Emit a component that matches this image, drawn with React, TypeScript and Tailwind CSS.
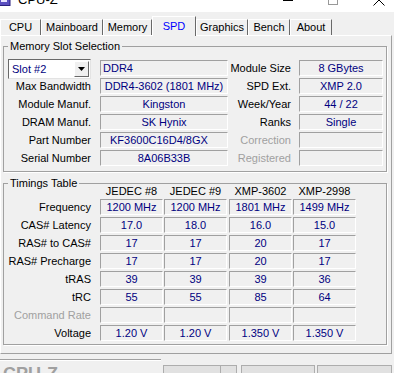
import React from "react"

const sunken =
  "h-[16px] border border-t-[#a0a0a0] border-l-[#a0a0a0] border-r-white border-b-white flex items-center text-[#000080] leading-none whitespace-pre"

const memRows = [
  { label: "Max Bandwidth", value: "DDR4-3602 (1801 MHz)", rLabel: "SPD Ext.", rValue: "XMP 2.0" },
  { label: "Module Manuf.", value: "Kingston", rLabel: "Week/Year", rValue: "44 / 22" },
  { label: "DRAM Manuf.", value: "SK Hynix", rLabel: "Ranks", rValue: "Single" },
  { label: "Part Number", value: "KF3600C16D4/8GX", rLabel: "Correction", rValue: "", dim: true, left: true },
  { label: "Serial Number", value: "8A06B33B", rLabel: "Registered", rValue: "", dim: true },
]

const timings = [
  { label: "Frequency", values: ["1200 MHz", "1200 MHz", "1801 MHz", "1499 MHz"] },
  { label: "CAS# Latency", values: ["17.0", "18.0", "16.0", "15.0"] },
  { label: "RAS# to CAS#", values: ["17", "17", "20", "17"] },
  { label: "RAS# Precharge", values: ["17", "17", "20", "17"] },
  { label: "tRAS", values: ["39", "39", "39", "36"] },
  { label: "tRC", values: ["55", "55", "85", "64"] },
  { label: "Command Rate", values: ["", "", "", ""], dim: true },
  { label: "Voltage", values: ["1.20 V", "1.20 V", "1.350 V", "1.350 V"] },
]

const colGap = ["", "ml-[1px]", "ml-[2px]", "ml-[1px]"]
const headers = ["JEDEC #8", "JEDEC #9", "XMP-3602", "XMP-2998"]

const tabs = [
  { name: "CPU", w: "w-[41px]" },
  { name: "Mainboard", w: "w-[62px]" },
  { name: "Memory", w: "w-[49px]" },
  { name: "SPD", w: "w-[44px]", active: true },
  { name: "Graphics", w: "w-[52px]" },
  { name: "Bench", w: "w-[42px]" },
  { name: "About", w: "w-[42px]" },
]

function TitleBar() {
  return (
    <div className="h-[12px] bg-white overflow-hidden">
      <div className="flex items-center h-[24px] -mt-[12px]">
        <svg width="11" height="12" viewBox="0 0 11 12" className="shrink-0">
          <rect x="-4" y="0.5" width="14" height="11" fill="#5a4fc0" stroke="#2a2080" />
          <rect x="1" y="3" width="6" height="5" fill="#e8e4ff" />
        </svg>
        <span className="ml-[7px] text-[13px] text-black">CPU-Z</span>
        <div className="ml-[225px] w-[10px] h-px bg-black" />
        <div className="ml-[35px] w-[10px] h-[10px] border border-[#999999]" />
        <svg width="12" height="12" viewBox="0 0 12 12" className="ml-[35px]">
          <path d="M0.5 0.5 L11.5 11.5 M11.5 0.5 L0.5 11.5" stroke="#000" strokeWidth="1" />
        </svg>
      </div>
    </div>
  )
}

function Tabs() {
  return (
    <div className="mt-[4px] h-[19px] flex items-end">
      {tabs.map((t) =>
        t.active ? (
          <div
            key={t.name}
            className={`${t.w} h-[20px] -mb-px relative z-10 bg-[#f0f0f0] border-t border-l border-r border-t-white border-l-white border-r-[#696969] flex items-center justify-center pb-[1px] text-[#0000ff]`}
          >
            {t.name}
          </div>
        ) : (
          <div
            key={t.name}
            className={`${t.w} h-[16px] bg-[#f0f0f0] border-t border-l border-r border-t-white border-l-white border-r-[#696969] flex items-center justify-center`}
          >
            {t.name}
          </div>
        )
      )}
    </div>
  )
}

function Dropdown() {
  return (
    <div className="ml-[4px] w-[83px] h-[20px] bg-white border border-t-[#696969] border-l-[#696969] border-r-[#e3e3e3] border-b-[#e3e3e3] flex items-center">
      <span className="pl-[3px] text-[#000080] flex-1">Slot #2</span>
      <div className="w-[15px] h-[16px] mr-px bg-[#f0f0f0] border border-t-white border-l-white border-r-[#696969] border-b-[#696969] flex items-center justify-center">
        <svg width="7" height="4" viewBox="0 0 7 4">
          <path d="M0 0 H7 L3.5 4 Z" fill="#000" />
        </svg>
      </div>
    </div>
  )
}

function MemorySlot() {
  return (
    <fieldset className="ml-[2px] mt-[4px] w-[384px] border border-[#a0a0a0] shadow-[1px_1px_0_white] pt-[6px] pb-[4px]">
      <legend className="ml-[4px] px-[2px] leading-[13px]">Memory Slot Selection</legend>
      <div className="flex items-start h-[18px]">
        <Dropdown />
        <div className={`${sunken} ml-[9px] mt-px w-[128px] pl-[2px]`}>DDR4</div>
        <div className="w-[63px] mt-px h-[16px] flex items-center justify-end">Module Size</div>
        <div className={`${sunken} ml-[8px] mt-px w-[84px] justify-center`}>8 GBytes</div>
      </div>
      {memRows.map((r) => (
        <div key={r.label} className="flex items-start h-[18px]">
          <div className="w-[87px] mt-px h-[16px] flex items-center justify-end">{r.label}</div>
          <div className={`${sunken} ml-[9px] mt-px w-[128px] ${r.left ? "justify-start pl-[9px]" : "justify-center"}`}>
            {r.value}
          </div>
          <div className={`w-[63px] mt-px h-[16px] flex items-center justify-end ${r.dim ? "text-[#a0a0a0]" : ""}`}>
            {r.rLabel}
          </div>
          <div className={`${sunken} ml-[8px] mt-px w-[84px] justify-center`}>{r.rValue}</div>
        </div>
      ))}
    </fieldset>
  )
}

function TimingsTable() {
  return (
    <fieldset className="ml-[2px] mt-[5px] w-[384px] border border-[#a0a0a0] shadow-[1px_1px_0_white] pb-[2px]">
      <legend className="ml-[4px] px-[2px] leading-[13px]">Timings Table</legend>
      <div className="flex h-[13px] -mt-[5px] items-center pl-[96px]">
        {headers.map((h, i) => (
          <div key={h} className={`${colGap[i]} w-[63px] text-center`}>
            {h}
          </div>
        ))}
      </div>
      {timings.map((r) => (
        <div key={r.label} className="flex items-start h-[18px]">
          <div className={`w-[87px] mt-px h-[16px] flex items-center justify-end ${r.dim ? "text-[#a0a0a0]" : ""}`}>
            {r.label}
          </div>
          <div className="ml-[9px] flex">
            {r.values.map((v, i) => (
              <div key={i} className={`${sunken} ${colGap[i]} mt-px w-[63px] justify-center`}>
                {v}
              </div>
            ))}
          </div>
        </div>
      ))}
    </fieldset>
  )
}

function Footer() {
  return (
    <div className="flex items-start">
      <div className="w-[161px]">
        <div className="mt-[5px] h-[2px] border-t border-t-[#a0a0a0] border-b border-b-white" />
        <div className="mt-[4px] ml-[3px] text-[18px] leading-[18px] font-bold text-[#a0a0a0]">CPU-Z</div>
      </div>
      <div className="mt-[11px] ml-[2px] w-[74px] h-[22px] bg-[#e1e1e1] border border-[#adadad] flex">
        <div className="flex-1 pt-[3px] text-center">Tools</div>
        <div className="w-[16px] border-l border-l-[#adadad] flex justify-center pt-[7px]">
          <svg width="7" height="4" viewBox="0 0 7 4">
            <path d="M0 0 H7 L3.5 4 Z" fill="#000" />
          </svg>
        </div>
      </div>
      <div className="mt-[11px] ml-[4px] w-[74px] h-[22px] bg-[#e1e1e1] border border-[#adadad] pt-[3px] text-center">
        Validate
      </div>
      <div className="mt-[11px] ml-[2px] w-[75px] h-[22px] bg-[#e1e1e1] border border-[#adadad] pt-[3px] text-center">
        Close
      </div>
    </div>
  )
}

export default function App() {
  return (
    <div className="w-[394px] h-[373px] overflow-hidden bg-[#f0f0f0] font-['Liberation_Sans',Arial,sans-serif] text-[11px] text-black">
      <TitleBar />
      <Tabs />
      <div className="w-[392px] h-[319px] border border-t-white border-l-white border-r-[#a0a0a0] border-b-[#a0a0a0]">
        <MemorySlot />
        <TimingsTable />
      </div>
      <Footer />
    </div>
  )
}
